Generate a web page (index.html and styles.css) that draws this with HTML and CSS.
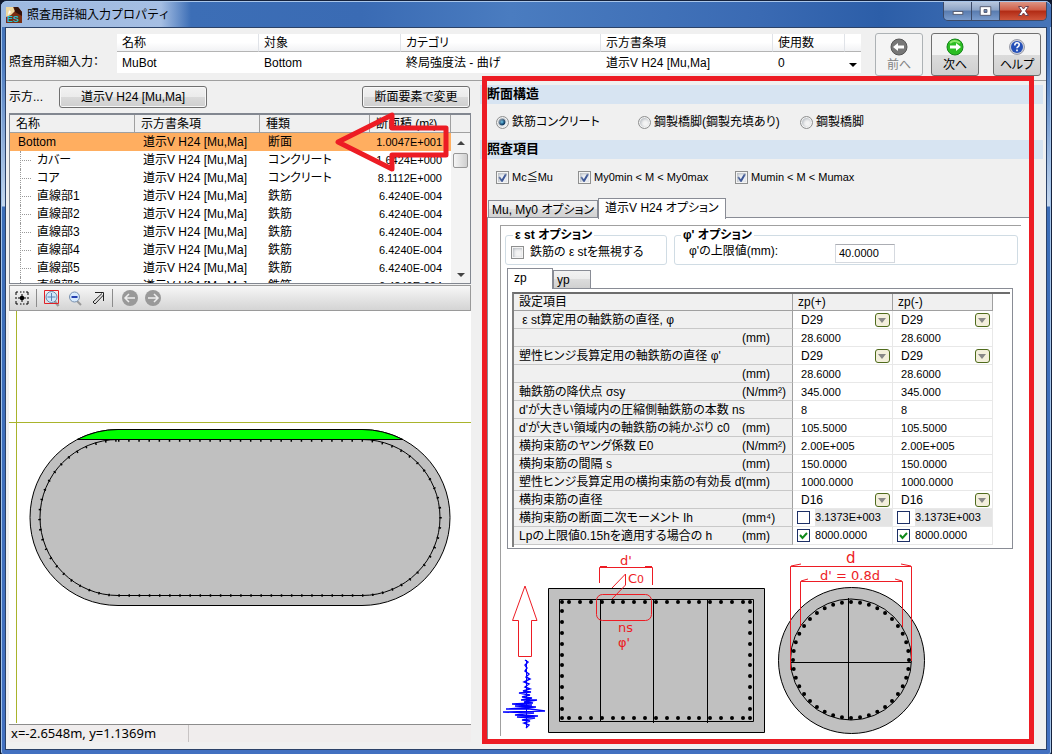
FILE: index.html
```html
<!DOCTYPE html>
<html lang="ja">
<head>
<meta charset="utf-8">
<title>照査用詳細入力プロパティ</title>
<link rel="stylesheet" href="styles.css">
</head>
<body>
<div class="window">
  <header class="titlebar">
    <svg class="app-icon" viewBox="0 0 16 16"><path d="M0 0h12l4 5v11H0z" fill="#7a2f12"/><path d="M0 0h7l2 4-4 4-5 2z" fill="#f0d9a0"/><path d="M8 0h4l4 5v4L9 5z" fill="#351208"/><path d="M3 3l2 2-3 3z" fill="#fff"/><text x="1" y="15" class="app-icon-text">ES</text></svg>
    <h1 class="title">照査用詳細入力プロパティ</h1>
    <div class="window-buttons">
      <button class="wb" aria-label="最小化"><svg viewBox="0 0 28 18"><rect x="9.500" y="9.500" width="10" height="3" fill="#fff" stroke="#555b70"/></svg></button>
      <button class="wb" aria-label="最大化"><svg viewBox="0 0 28 18"><path d="M8.500 4.500h11v9h-11zM12.500 7.500v3h3v-3z" fill="#fff" fill-rule="evenodd" stroke="#555b70"/></svg></button>
      <button class="wb wb-close" aria-label="閉じる"><svg viewBox="0 0 46 18"><path d="M18.500 4.500h3l2 2.500 2-2.500h3L25.500 9l3 4.500h-3l-2-2.500-2 2.500h-3l3-4.500z" fill="#fff" stroke="#6b4050"/></svg></button>
    </div>
  </header>
  <main class="client">
    <section class="header">
      <span class="header-label">照査用詳細入力：</span>
      <table class="summary">
        <colgroup><col class="s1"><col class="s2"><col class="s3"><col class="s4"><col class="s5"><col class="s6"></colgroup>
        <thead><tr><th>名称</th><th>対象</th><th>カテゴリ</th><th>示方書条項</th><th>使用数</th><th></th></tr></thead>
        <tbody><tr><td>MuBot</td><td>Bottom</td><td>終局強度法 - 曲げ</td><td>道示V H24 [Mu,Ma]</td><td>0</td><td><button class="drop" aria-label="一覧を開く"></button></td></tr></tbody>
      </table>
      <div class="nav">
        <button class="nav-btn" disabled><svg viewBox="0 0 18 18"><circle cx="9" cy="9" r="8" fill="#777" stroke="#555"/><path d="M3 9l5-4v2.500h6v3H8V13z" fill="#fff"/></svg>前へ</button>
        <button class="nav-btn"><svg viewBox="0 0 18 18"><circle cx="9" cy="9" r="8" fill="#2bbd22" stroke="#15851a"/><path d="M4 5q4-4 10 0" fill="none" stroke="#8be66b" stroke-width="2"/><path d="M15 9l-5-4v2.500H4v3h6V13z" fill="#fff"/></svg>次へ</button>
        <button class="nav-btn nav-help"><svg viewBox="0 0 18 18"><circle cx="9" cy="9" r="7.500" fill="#c9ccd8" stroke="#9a9da9"/><circle cx="9" cy="9" r="6" fill="#2450b8"/><path d="M6.800 7.500q0-2.700 2.200-2.700t2.200 2Q11.200 8 10 8.700q-1 .5-1 1.500M9 11.500v1.700" fill="none" stroke="#fff" stroke-width="1.600"/></svg>ヘルプ</button>
      </div>
    </section>
    <div class="panes">
      <section class="left">
        <div class="left-bar"><span>示方...</span><button class="btn btn-code">道示V H24 [Mu,Ma]</button><button class="btn btn-change">断面要素で変更</button></div>
        <div class="list">
          <div class="list-view">
            <table class="elements">
              <colgroup><col class="e1"><col class="e2"><col class="e3"><col class="e4"></colgroup>
              <thead><tr><th>名称</th><th>示方書条項</th><th>種類</th><th>断面積 (m²)</th></tr></thead>
              <tbody>
                <tr class="selected"><td>Bottom</td><td>道示V H24 [Mu,Ma]</td><td>断面</td><td>1.0047E+001</td></tr>
                <tr class="child"><td>カバー</td><td>道示V H24 [Mu,Ma]</td><td>コンクリート</td><td>1.6424E+000</td></tr>
                <tr class="child"><td>コア</td><td>道示V H24 [Mu,Ma]</td><td>コンクリート</td><td>8.1112E+000</td></tr>
                <tr class="child"><td>直線部1</td><td>道示V H24 [Mu,Ma]</td><td>鉄筋</td><td>6.4240E-004</td></tr>
                <tr class="child"><td>直線部2</td><td>道示V H24 [Mu,Ma]</td><td>鉄筋</td><td>6.4240E-004</td></tr>
                <tr class="child"><td>直線部3</td><td>道示V H24 [Mu,Ma]</td><td>鉄筋</td><td>6.4240E-004</td></tr>
                <tr class="child"><td>直線部4</td><td>道示V H24 [Mu,Ma]</td><td>鉄筋</td><td>6.4240E-004</td></tr>
                <tr class="child"><td>直線部5</td><td>道示V H24 [Mu,Ma]</td><td>鉄筋</td><td>6.4240E-004</td></tr>
                <tr class="child"><td>直線部6</td><td>道示V H24 [Mu,Ma]</td><td>鉄筋</td><td>6.4240E-004</td></tr>
              </tbody>
            </table>
            <div class="scroll"><div class="scroll-head"></div><i class="up"></i><i class="thumb"></i><i class="down"></i></div>
          </div>
          <svg class="arrow" viewBox="0 0 116 62"><path d="M5 30L59 3V16H113V43H59V57Z" fill="none" stroke="#ed1c24" stroke-width="5" stroke-linejoin="round"/></svg>
        </div>
        <div class="tools">
          <button class="tool" aria-label="全体表示"><svg viewBox="0 0 18 18"><path d="M3 6V3h2M7 3h1.500M10 3h1.500M13 3h2v3M15 8v2M15 12v3h-2M11.500 15H10M8.500 15H7M5 15H3v-3M3 10V8" fill="none" stroke="#000"/><circle cx="9" cy="9" r="2.300"/><path d="M5 9h8M9 5v8" stroke="#000"/></svg></button>
          <span class="sep"></span>
          <button class="tool" aria-label="拡大"><svg viewBox="0 0 18 18"><path d="M11.500 12l4 5" stroke="#999" stroke-width="2.500"/><circle cx="8.500" cy="8" r="5.500" fill="#cfe7fb" stroke="#6886a8"/><path d="M4.500 8h8M8.500 4v8" stroke="#5a82b4"/><path d="M1.500 1.500h14v13h-14z" fill="none" stroke="#e02028"/></svg></button>
          <button class="tool" aria-label="縮小"><svg viewBox="0 0 18 18"><path d="M11 12l4 4" stroke="#999" stroke-width="2"/><circle cx="8.500" cy="8" r="5" fill="#d7eafd" stroke="#7790b0"/><path d="M5.500 8h6" stroke="#2340b0" stroke-width="2"/></svg></button>
          <button class="tool" aria-label="移動"><svg viewBox="0 0 18 18"><path d="M6 3.500h8.500V12M4 13L13 4.500M6 15l8.500-9M4 13l2 2" fill="none" stroke="#222"/></svg></button>
          <span class="sep sep-wide"></span>
          <button class="tool" aria-label="戻る"><svg viewBox="0 0 18 18"><circle cx="9" cy="9" r="8" fill="#999"/><path d="M14 9H4M8 5L4 9l4 4" fill="none" stroke="#eee" stroke-width="1.500"/></svg></button>
          <button class="tool" aria-label="進む"><svg viewBox="0 0 18 18"><circle cx="9" cy="9" r="8" fill="#999"/><path d="M4 9h10M10 5l4 4-4 4" fill="none" stroke="#eee" stroke-width="1.500"/></svg></button>
        </div>
        <div class="canvas">
          <svg viewBox="9 311 462 412" role="img" aria-label="断面図">
            <path d="M16.500 311V723M9 422.500H471" stroke="#a9b42c" fill="none"/>
            <path d="M118 429.500H362A88 88 0 0 1 362 605.500H118A88 88 0 0 1 118 429.500Z" fill="#c0c0c0" stroke="#000"/>
            <path d="M77 439.500Q97 429.500 118 429.500H362Q383 429.500 403 439.500Z" fill="#0f0" stroke="#000"/>
            <path d="M118 439.500H362A78 78 0 0 1 362 595.500H118A78 78 0 0 1 118 439.500Z" fill="none" stroke="#000"/>
            <path d="M118 440.500H362A78 77 0 0 1 362 595.500H118A78 77 0 0 1 118 440.500Z" fill="none" stroke="#000" stroke-width="2.500" stroke-dasharray="1.500 8.650"/>
          </svg>
        </div>
        <footer class="status"><span class="coords">x=-2.6548m, y=1.1369m</span></footer>
      </section>
      <section class="right">
        <h2 class="band">断面構造</h2>
        <div class="options">
          <label class="o1"><input type="radio" name="structure" checked>鉄筋コンクリート</label>
          <label class="o2"><input type="radio" name="structure">鋼製橋脚(鋼製充填あり)</label>
          <label><input type="radio" name="structure">鋼製橋脚</label>
        </div>
        <h2 class="band">照査項目</h2>
        <div class="options latin">
          <label class="c1"><input type="checkbox" checked>Mc≦Mu</label>
          <label class="c2"><input type="checkbox" checked>My0min &lt; M &lt; My0max</label>
          <label><input type="checkbox" checked>Mumin &lt; M &lt; Mumax</label>
        </div>
        <div class="tabs"><button class="tab">Mu, My0 オプション</button><button class="tab active">道示V H24 オプション</button></div>
        <div class="page">
          <div class="inner">
            <div class="groups">
              <fieldset class="group g1"><legend>ε st オプション</legend><label><input type="checkbox">鉄筋の ε stを無視する</label></fieldset>
              <fieldset class="group g2"><legend>φ' オプション</legend><label for="limit">φ'の上限値(mm):</label><input id="limit" class="limit" type="text" value="40.0000"></fieldset>
            </div>
            <div class="tabs subtabs"><button class="tab active">zp</button><button class="tab">yp</button></div>
            <div class="subpage">
              <div class="grid-frame">
              <table class="grid">
                <colgroup><col class="p1"><col class="p2"><col class="p3"><col class="p3"></colgroup>
                <thead><tr><th colspan="2">設定項目</th><th>zp(+)</th><th>zp(-)</th></tr></thead>
                <tbody>
                  <tr><th>&nbsp;ε st算定用の軸鉄筋の直径, φ</th><th></th><td><span class="pick"><select aria-label="直径 zp(+)"><option>D29</option></select><i></i></span></td><td><span class="pick"><select aria-label="直径 zp(-)"><option>D29</option></select><i></i></span></td></tr>
                  <tr><th></th><th>(mm)</th><td>28.6000</td><td>28.6000</td></tr>
                  <tr><th>塑性ヒンジ長算定用の軸鉄筋の直径 φ'</th><th></th><td><span class="pick"><select aria-label="φ' zp(+)"><option>D29</option></select><i></i></span></td><td><span class="pick"><select aria-label="φ' zp(-)"><option>D29</option></select><i></i></span></td></tr>
                  <tr><th></th><th>(mm)</th><td>28.6000</td><td>28.6000</td></tr>
                  <tr><th>軸鉄筋の降伏点 σsy</th><th>(N/mm²)</th><td>345.000</td><td>345.000</td></tr>
                  <tr><th>d'が大きい領域内の圧縮側軸鉄筋の本数 ns</th><th></th><td>8</td><td>8</td></tr>
                  <tr><th>d'が大きい領域内の軸鉄筋の純かぶり c0</th><th>(mm)</th><td>105.5000</td><td>105.5000</td></tr>
                  <tr><th>横拘束筋のヤング係数 E0</th><th>(N/mm²)</th><td>2.00E+005</td><td>2.00E+005</td></tr>
                  <tr><th>横拘束筋の間隔 s</th><th>(mm)</th><td>150.0000</td><td>150.0000</td></tr>
                  <tr><th>塑性ヒンジ長算定用の横拘束筋の有効長 d'</th><th>(mm)</th><td>1000.0000</td><td>1000.0000</td></tr>
                  <tr><th>横拘束筋の直径</th><th></th><td><span class="pick"><select aria-label="横拘束筋 zp(+)"><option>D16</option></select><i></i></span></td><td><span class="pick"><select aria-label="横拘束筋 zp(-)"><option>D16</option></select><i></i></span></td></tr>
                  <tr><th>横拘束筋の断面二次モーメント Ih</th><th>(mm⁴)</th><td><label class="cell off"><input type="checkbox"><span>3.1373E+003</span></label></td><td><label class="cell off"><input type="checkbox"><span>3.1373E+003</span></label></td></tr>
                  <tr><th>Lpの上限値0.15hを適用する場合の h</th><th>(mm)</th><td><label class="cell"><input type="checkbox" checked><span>8000.0000</span></label></td><td><label class="cell"><input type="checkbox" checked><span>8000.0000</span></label></td></tr>
                </tbody>
              </table>
              </div>
            </div>
            <svg class="figure" viewBox="501 550 520 186" role="img" aria-label="配筋の説明図">
              <path d="M525 586L537 620.500H531.500V656.500H518.500V620.500H512.500Z" fill="none" stroke="#ed1c24"/>
              <path d="M525 660L528 662L525 665L527 668L525 671L529 674L526 677L530 679L524 682L529 684L525 687L530 689L523 691L531 692L519 693L530 695L522 697L532 698L521 700L537 700L524 702L533 703L512 704L532 705L515 706L536 707L506 709L530 709L545 711L503 712L534 713L515 715L538 716L517 717L535 718L522 720L530 721L524 723L529 725L526 728" fill="none" stroke="#00f" stroke-width="1.400"/>
              <path d="M526.500 660V728" stroke="#00f"/>
              <path d="M548.500 588.500H764.500V732.500H548.500ZM559.500 599.500H753.500V721.500H559.500ZM600.500 599V722M653.500 599V723M707.500 599V723" fill="#c0c0c0" stroke="#000"/>
              <path d="M562 602h0M569 602h0M580 602h0M591 602h0M602 602h0M613 602h0M623 602h0M634 602h0M645 602h0M656 602h0M667 602h0M678 602h0M689 602h0M699 602h0M710 602h0M721 602h0M732 602h0M743 602h0M750 602h0M562 718h0M569 718h0M580 718h0M591 718h0M602 718h0M613 718h0M623 718h0M634 718h0M645 718h0M656 718h0M667 718h0M678 718h0M689 718h0M699 718h0M710 718h0M721 718h0M732 718h0M743 718h0M750 718h0M562 611h0M562 622h0M562 633h0M562 644h0M562 655h0M562 665h0M562 676h0M562 687h0M562 698h0M562 709h0M750 611h0M750 622h0M750 633h0M750 644h0M750 655h0M750 665h0M750 676h0M750 687h0M750 698h0M750 709h0" stroke="#000" stroke-width="4" stroke-linecap="round"/>
              <circle cx="851.500" cy="660.500" r="73" fill="#c0c0c0" stroke="#000"/>
              <circle cx="851" cy="659.500" r="60.500" fill="none" stroke="#000"/>
              <circle cx="851" cy="660" r="58" fill="none" stroke="#000" stroke-width="4" stroke-linecap="round" pathLength="40" stroke-dasharray="0 1"/>
              <path d="M848.500 598V720M791 662.500H911" stroke="#000"/>
              <g fill="none" stroke="#ed1c24">
                <path d="M599.500 583V567.500H652.500V585M600 566.500h7M645 566.500h7"/>
                <rect x="596.500" y="594.500" width="55" height="26" rx="6"/>
                <path d="M612 588L625.500 574V585L612 599"/>
                <path d="M790.500 670V566.500H911.500V661M791 566l10-2M911 566l-10-2M800.500 626V581.500H902.500V627M801 581l7-2M902 581l-7-2"/>
              </g>
              <g class="figure-text">
                <text x="620" y="565">d'</text><text x="628" y="583">C</text><text x="637" y="583" class="small">0</text>
                <text x="618" y="632">ns</text><text x="618" y="647">φ'</text>
                <text x="846" y="563" class="large">d</text><text x="820" y="580">d' = 0.8d</text>
              </g>
            </svg>
          </div>
        </div>
        <div class="highlight"></div>
      </section>
    </div>
  </main>
</div>
</body>
</html>
```
FILE: styles.css
```css
* { box-sizing: border-box; }
body { margin: 0; background: #10182c; color: #000; font: 12px/16px "Liberation Sans", "Noto Sans CJK JP", sans-serif; font-feature-settings: "palt"; }
button, input, select { font: inherit; font-feature-settings: inherit; color: inherit; margin: 0; padding: 0; }
svg { display: block; }
table { border-collapse: separate; border-spacing: 0; table-layout: fixed; }
th, td { padding: 0; font-weight: normal; text-align: left; white-space: nowrap; }

.window { min-height: 100vh; display: flex; flex-direction: column; padding: 0 4px 4px; border: 1px solid #15223c; border-radius: 7px 7px 3px 3px; background: linear-gradient(#3f6fb5, #4a7ac0 60px, #c5d8ef 205px, #3b6db8 206px, #4270c0); box-shadow: inset 0 1px #a9c6ea, inset 1px 0 #a3c4ea, inset -1px 0 #a3c4ea; }
.titlebar { height: 26px; display: flex; align-items: center; gap: 5px; margin: 0 -4px; padding-left: 5px; border-top: 1px solid #a9c6ea; border-radius: 6px 6px 0 0; background: linear-gradient(90deg, #9db9e0, #a5bee3 160px, #3c6eb6 190px, #3a6bb4 360px, #4a7cc0 510px, #3a6ab3 760px, #2c5ea8 880px, #4674b8); }
.app-icon { width: 16px; height: 16px; overflow: visible; }
.app-icon-text { font: bold 9px "Liberation Sans", sans-serif; fill: #22c4d8; }
.title { flex: 1; margin: 0; font-size: 12px; font-weight: normal; font-feature-settings: normal; }
.window-buttons { display: flex; align-self: flex-start; margin-right: 4px; border: 1px solid #3c4a68; border-top: 0; border-radius: 0 0 5px 5px; overflow: hidden; }
.wb { width: 28px; height: 18px; border: 0; border-right: 1px solid #3c4a68; background: linear-gradient(#b7c6dd, #8da4c6 45%, #587baf 50%, #7b9ccc); }
.wb-close { width: 46px; border-right: 0; background: linear-gradient(#dc9585, #cf5d47 45%, #b12a14 50%, #cf553b); }
.wb svg { width: 100%; height: 18px; }

.client { flex: 1; display: flex; flex-direction: column; border: 1px solid #2b4268; background: #f0f0f0; }
.header { height: 53px; display: flex; align-items: flex-start; padding: 5px 5px 0 3px; border-bottom: 1px solid #a0a0a0; }
.header-label { width: 108px; padding-top: 21px; white-space: nowrap; }
.summary { flex: 0 1 744px; width: 744px; margin-top: 1px; background: #fff; }
.s1, .s2 { width: 142px; }
.s3 { width: 200px; }
.s4 { width: 172px; }
.s5 { width: 72px; }
.s6 { width: 16px; }
.summary th { height: 18px; padding-left: 5px; border-right: 1px solid #e0e3e8; border-bottom: 1px solid #b4b4b4; background: linear-gradient(#fff 50%, #f1f2f4); }
.summary td { height: 21px; padding-left: 5px; }
.summary th:last-child, .summary td:last-child { padding: 0; border-right: 0; }
.drop { display: block; width: 16px; height: 16px; border: 0; background: none; }
.drop::after { content: ""; display: block; width: 0; margin: 5px auto 0; border: 4px solid transparent; border-top-color: #000; border-bottom: 0; }
.nav { flex: 1; display: flex; justify-content: flex-end; gap: 8px; }
.nav-btn { width: 48px; height: 43px; display: flex; flex-direction: column; align-items: center; justify-content: flex-end; gap: 1px; padding-bottom: 2px; border: 1px solid #707070; border-radius: 3px; background: linear-gradient(#f4f4f4 50%, #dcdcdc 50%, #cfcfcf); white-space: nowrap; }
.nav-btn:disabled { border-color: #adb2b5; background: #f4f4f4; color: #838383; }
.nav-btn svg { width: 18px; height: 18px; }
.nav-help { margin-left: 6px; }

.panes { flex: 1; display: grid; grid-template-columns: 474px minmax(0, 1fr); }
.left { display: flex; flex-direction: column; padding: 5px 9px 7px 3px; }
.left-bar { height: 22px; display: flex; align-items: center; margin: 0 1px 5px 0; }
.left-bar span { width: 50px; }
.btn { height: 22px; border: 1px solid #707070; border-radius: 3px; background: linear-gradient(#f2f2f2, #ebebeb 50%, #dadada 50%, #cfcfcf); box-shadow: inset 0 0 0 1px #f8f8f8; }
.btn-code { width: 148px; }
.btn-change { width: 108px; margin-left: auto; }
.list { position: relative; height: 172px; }
.list-view { height: 171px; display: flex; overflow: hidden; border: 1px solid #828790; border-top-width: 2px; background: #fff; }
.elements { width: 441px; flex: none; height: max-content; }
.e1, .e2 { width: 125px; }
.e3 { width: 110px; }
.e4 { width: 81px; }
.elements th { height: 18px; padding-left: 6px; border-right: 1px solid #a0a0a0; border-bottom: 1px solid #a0a0a0; background: #f0f0f0; }
.elements td { height: 18px; padding-left: 8px; }
.elements td:last-child { padding: 0 9px 0 0; text-align: right; font-size: 11px; }
.selected { background: #ffae60; }
.child td:first-child { padding-left: 0; }
.child td:first-child::before { content: ""; display: inline-block; vertical-align: top; width: 10px; height: 18px; margin: -1px 6px -1px 10px; border-left: 1px dotted #999; background: repeating-linear-gradient(90deg, transparent 0 1px, #999 1px 2px) 0 9px / 100% 1px no-repeat; }
.scroll { flex: 1; display: flex; flex-direction: column; align-items: center; background: #f3f3f3; }
.scroll-head { width: 100%; height: 18px; background: #f0f0f0; border-bottom: 1px solid #a0a0a0; }
.up, .down { width: 8px; border: 4px solid transparent; }
.up { margin: 8px 0; border-bottom-color: #444; border-top: 0; }
.down { margin: auto 0 6px; border-top-color: #444; border-bottom: 0; }
.thumb { width: 15px; height: 15px; border: 1px solid #979797; border-radius: 2px; background: linear-gradient(90deg, #f5f5f5, #cfcfcf); }
.arrow { position: absolute; left: 324px; top: -1px; width: 116px; height: 62px; }
.tools { height: 26px; display: flex; align-items: center; gap: 5px; padding-left: 3px; border: 1px solid #9a9a9a; background: linear-gradient(#f7f7f7, #d4d4d4); }
.tool { width: 18px; height: 18px; border: 0; background: none; }
.sep { width: 1px; height: 18px; margin-right: 1px; background: #8c8c8c; }
.sep-wide { margin-right: 3px; }
.canvas { flex: 1; background: #fff; }
.canvas svg { width: 100%; }
.status { height: 18px; border-top: 1px solid #8c8c8c; background: #f0eded; font: 13px/17px "Noto Sans", sans-serif; }
.coords { display: inline-block; width: 180px; padding-left: 2px; border-right: 1px solid #c8c4c4; }

.right { position: relative; display: flex; flex-direction: column; padding: 4px 3px 5px 0; }
.band { margin: 0; height: 19px; padding-left: 7px; background: #d7e4f2; font-size: 13px; line-height: 18px; }
.options { height: 36px; display: flex; align-items: center; padding-left: 16px; white-space: nowrap; }
.options label { display: flex; align-items: center; gap: 3px; }
.latin { font-size: 11px; }
.o1 { width: 142px; }
.o2 { width: 162px; }
.c1 { width: 82px; }
.c2 { width: 157px; }
input[type="radio"], input[type="checkbox"] { flex: none; appearance: none; width: 13px; height: 13px; border: 1px solid #8e8f8f; background: #f4f4f4; box-shadow: inset 0 0 0 1px #f4f4f4, inset 1px 1px 3px 1px #b5bac0; }
input[type="radio"] { border-radius: 50%; }
input[type="radio"]:checked { background: radial-gradient(circle at 45% 45%, #6fd0ee, #1c5a88 2px, #12395c 3px, #f0f4f7 4px); }
.options input[type="checkbox"]:checked { background: #eef1f5 url("data:image/svg+xml,%3Csvg xmlns='http://www.w3.org/2000/svg' viewBox='0 0 11 11'%3E%3Cpath d='M2 5l3 4 4-7' fill='none' stroke='%233c5696' stroke-width='2'/%3E%3C/svg%3E"); }
.tabs { display: flex; align-items: flex-end; height: 23px; padding-left: 8px; }
.tab { height: 18px; padding: 0 3px; border: 1px solid #898c95; border-bottom: 0; background: linear-gradient(#f2f2f2, #ebebeb 50%, #dcdcdc 50%, #d0d0d0); white-space: nowrap; }
.tab.active { position: relative; z-index: 1; height: 21px; margin-bottom: -1px; padding: 0 6px 2px; background: #fff; }
.page { flex: 1; margin: -1px 9px 0 7px; padding: 7px 12px 7px 12px; border: 1px solid #898c95; background: #fff; }
.inner { height: 100%; border: 1px solid #a0a0a0; border-width: 1px 0 0 1px; }
.groups { display: flex; gap: 7px; padding: 2px 3px 0 4px; }
.group { min-width: 0; height: 37px; margin: 0; padding: 0 0 0 5px; border: 1px solid #d0dce4; border-radius: 3px; white-space: nowrap; }
.g1 { width: 162px; }
.g2 { flex: 1; display: flex; align-items: center; padding-left: 14px; }
.group legend { height: 14px; line-height: 14px; padding: 0 2px; margin-left: 2px; font-weight: bold; }
.g2 legend { margin-left: -8px; }
.group label { display: flex; align-items: center; gap: 6px; height: 20px; }
.g2 label { width: 146px; align-items: flex-start; }
.limit { width: 60px; height: 19px; padding: 0 3px; border: 1px solid #d5d9df; border-top-color: #abadb3; font-size: 11px; }
.subtabs { height: 23px; padding-left: 6px; }
.subtabs .tab { width: 38px; text-align: left; }
.subtabs .tab.active { width: 46px; }
.subpage { margin: 0 8px 0 6px; padding: 3px 2px 1px 4px; border: 1px solid #898c95; background: #fff; }
.grid-frame { height: 255px; overflow: hidden; border: 2px solid #808080; border-width: 2px 0 0 2px; border-color: #6d6d6d #e0e0e0 #e0e0e0 #808080; }
.grid { width: 479px; }
.p1 { width: 221px; }
.p2 { width: 58px; }
.p3 { width: 100px; }
.grid th, .grid td { height: 18px; line-height: 16px; }
.grid thead th { height: 17px; padding-left: 5px; border-right: 1px solid #a0a0a0; border-bottom: 1px solid #a0a0a0; background: #f0f0f0; }
.grid tbody th { padding-left: 5px; border-bottom: 1px solid #c8c8c8; background: #f0f0f0; }
.grid tbody th + th { padding-left: 7px; border-right: 1px solid #a0a0a0; }
.grid td { padding-left: 8px; border-right: 1px solid #e8e8e8; border-bottom: 1px solid #e8e8e8; font-size: 11px; }
.pick { height: 16px; display: flex; align-items: center; padding-right: 2px; }
.pick select { flex: 1; appearance: none; height: 16px; border: 0; background: none; font-size: 12px; }
.pick i { width: 15px; height: 14px; padding: 4px 2px; border: 1px solid #4f6b1c; border-radius: 3px; background: #f3efdc; }
.pick i::after { content: ""; display: block; width: 0; border: 4px solid transparent; border-top: 5px solid #888; border-bottom: 0; }
.cell { height: 17px; display: flex; align-items: center; gap: 5px; margin-left: -4px; }
.cell span { flex: 1; line-height: 17px; }
.off span { background: #e4e4e4; }
.cell input[type="checkbox"] { border-color: #1c2f66; background: #fff; box-shadow: none; }
.cell input[type="checkbox"]:checked { background: #fff url("data:image/svg+xml,%3Csvg xmlns='http://www.w3.org/2000/svg' viewBox='0 0 11 11'%3E%3Cpath d='M2 5l2.500 3L9 3' fill='none' stroke='%23118a1c' stroke-width='2'/%3E%3C/svg%3E"); }
.figure { width: 100%; margin-top: 1px; }
.figure-text { font: 13px "DejaVu Sans", sans-serif; fill: #ed1c24; }
.figure-text .small { font-size: 11px; }
.figure-text .large { font-size: 15px; }
.highlight { position: absolute; left: 2px; top: -5px; right: 12px; bottom: 5px; border: 5px solid #ed1c24; pointer-events: none; z-index: 2; }
```
